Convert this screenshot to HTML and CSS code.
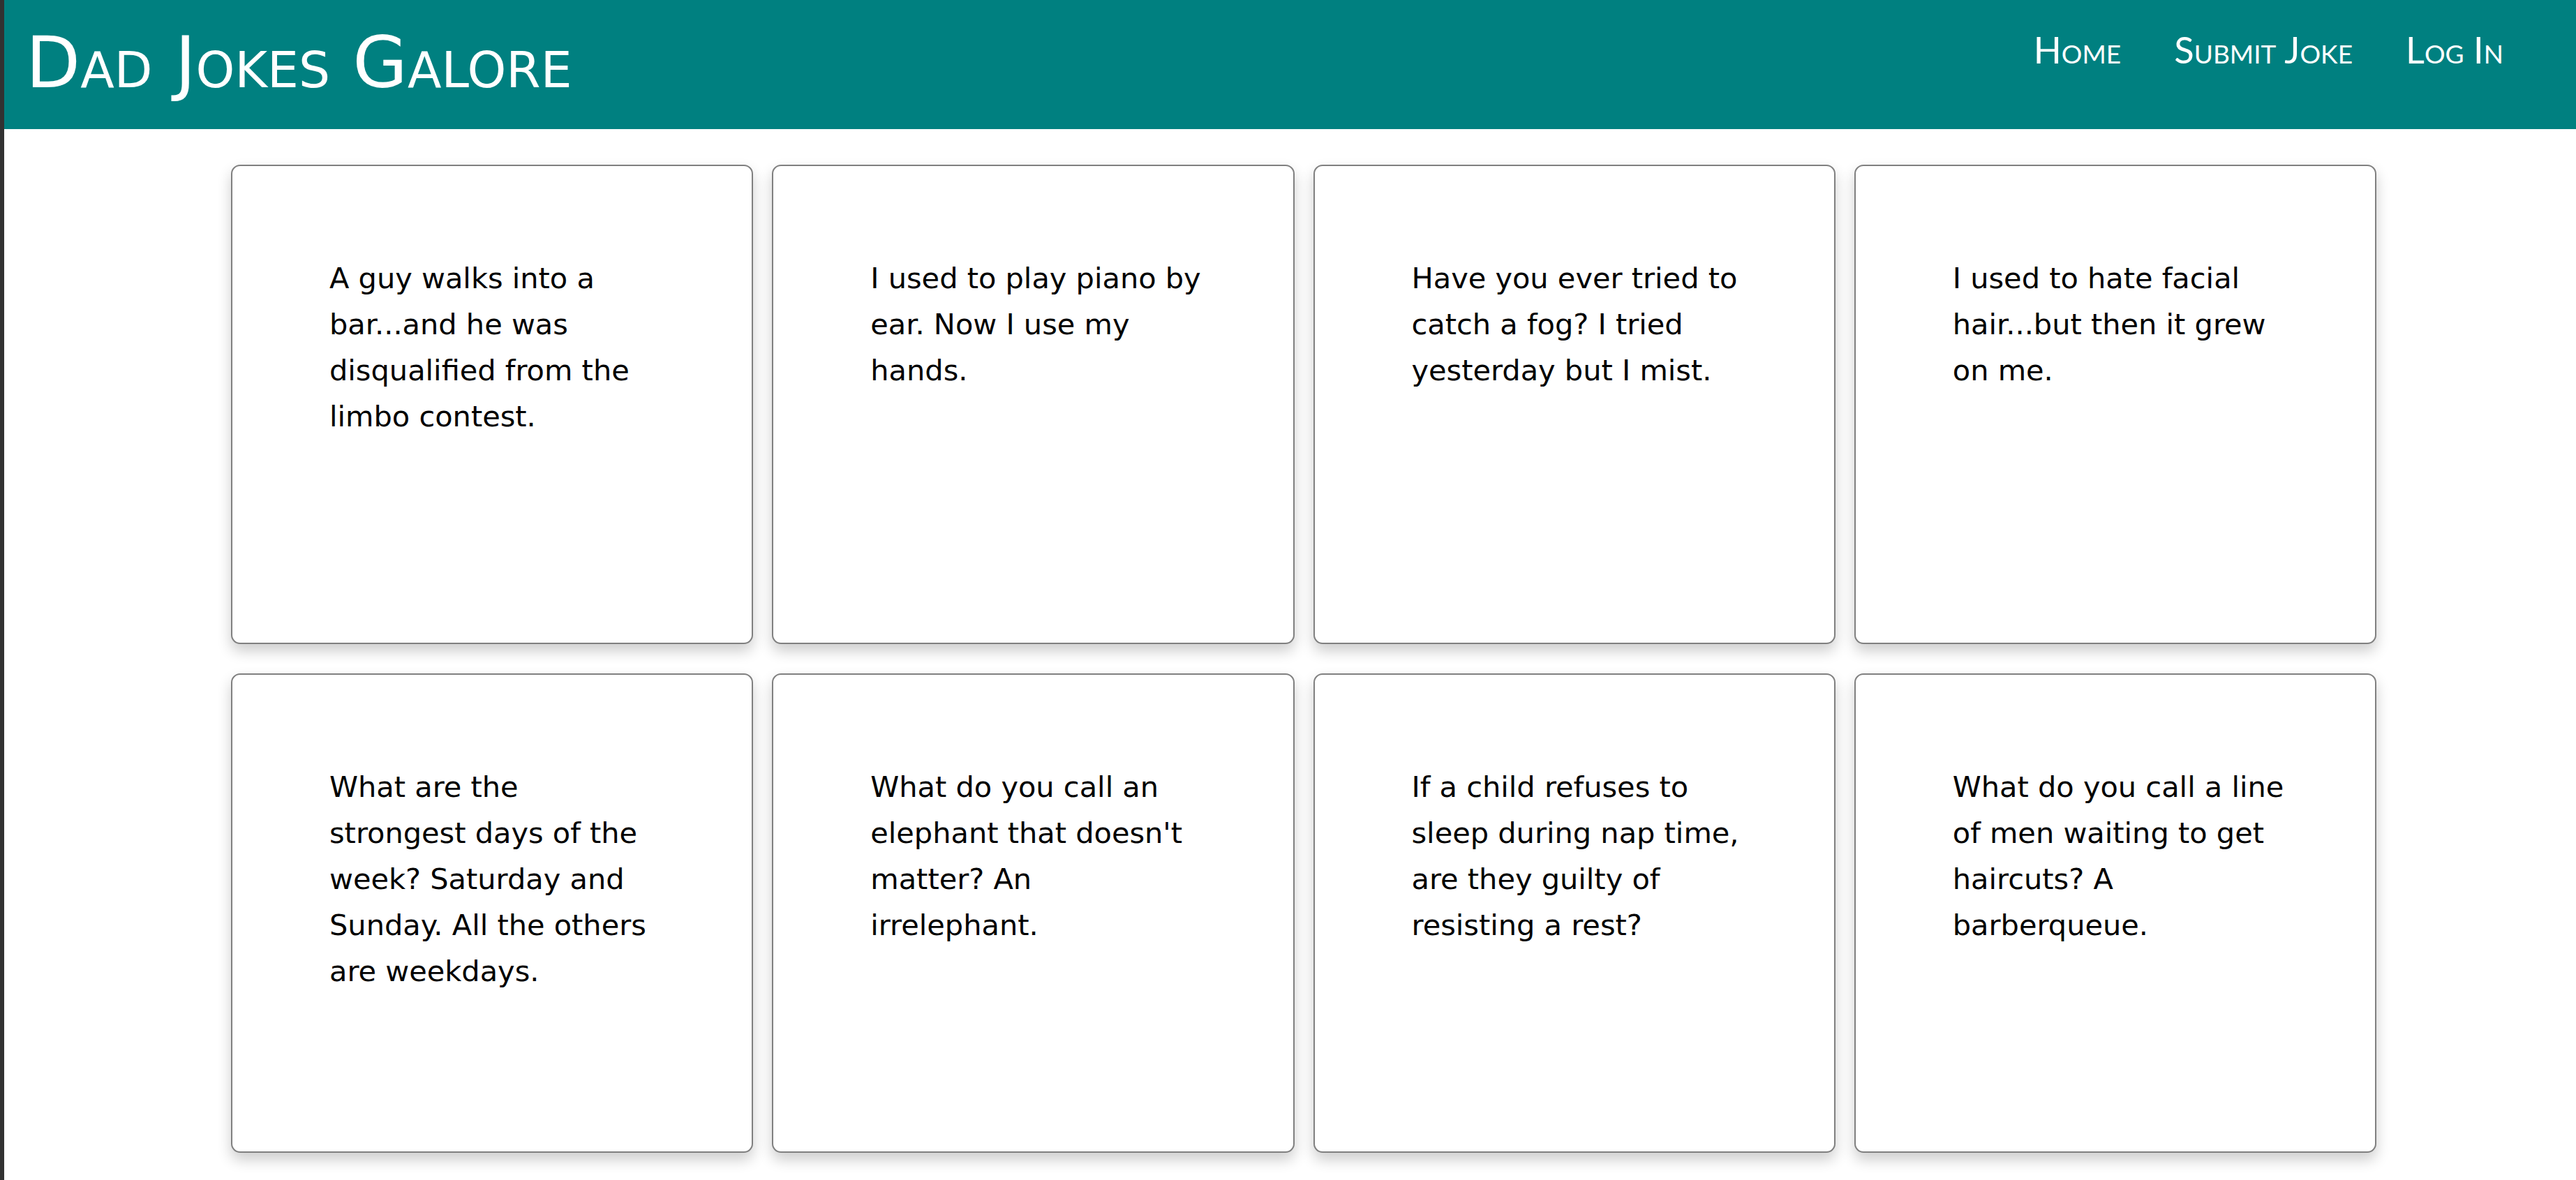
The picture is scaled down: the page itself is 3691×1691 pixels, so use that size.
FILE: index.html
```html
<!DOCTYPE html>
<html lang="en">
<head>
<meta charset="utf-8">
<title>Dad Jokes Galore</title>
<link rel="stylesheet" href="styles.css">
</head>
<body>
<header class="site-header">
  <h1 class="brand">Dad Jokes Galore</h1>
  <nav class="site-nav">
    <ul class="nav-list">
      <li><a class="nav-link" href="#">Home</a></li>
      <li><a class="nav-link" href="#">Submit Joke</a></li>
      <li><a class="nav-link" href="#">Log In</a></li>
    </ul>
  </nav>
</header>
<main class="jokes">
  <article class="joke-card"><p class="joke-text">A guy walks into a bar...and he was disqualified from the limbo contest.</p></article>
  <article class="joke-card"><p class="joke-text">I used to play piano by ear. Now I use my hands.</p></article>
  <article class="joke-card"><p class="joke-text">Have you ever tried to catch a fog? I tried yesterday but I mist.</p></article>
  <article class="joke-card"><p class="joke-text">I used to hate facial hair...but then it grew on me.</p></article>
  <article class="joke-card"><p class="joke-text">What are the strongest days of the week? Saturday and Sunday. All the others are weekdays.</p></article>
  <article class="joke-card"><p class="joke-text">What do you call an elephant that doesn't matter? An irrelephant.</p></article>
  <article class="joke-card"><p class="joke-text">If a child refuses to sleep during nap time, are they guilty of resisting a rest?</p></article>
  <article class="joke-card"><p class="joke-text">What do you call a line of men waiting to get haircuts? A barberqueue.</p></article>
</main>
</body>
</html>
```
FILE: styles.css
```css
html, body {
  margin: 0;
  padding: 0;
}

body {
  background: #ffffff;
  border-left: 6px solid #323232;
  min-height: 100vh;
  box-sizing: border-box;
}

.site-header {
  display: flex;
  justify-content: space-between;
  align-items: flex-start;
  height: 185px;
  background: #008080;
}

.brand {
  margin: 0;
  padding: 40px 0 0 31px;
  font-family: "Comic Sans MS", "DejaVu Sans", sans-serif;
  font-size: 101.5px;
  font-weight: normal;
  font-variant: small-caps;
  line-height: 1;
  color: #ffffff;
}

.nav-list {
  display: flex;
  gap: 76px;
  list-style: none;
  margin: 0;
  padding: 45px 104px 0 0;
}

.nav-link {
  font-family: Lato, "Open Sans", sans-serif;
  font-size: 52.5px;
  font-weight: 400;
  font-variant: small-caps;
  line-height: 1;
  color: #ffffff;
  text-decoration: none;
}

.jokes {
  display: grid;
  grid-template-columns: repeat(4, 1fr);
  column-gap: 27px;
  row-gap: 42px;
  padding: 51px 286px 60px 325px;
}

.joke-card {
  box-sizing: border-box;
  height: 687px;
  padding: 128px 127px 0 139px;
  background: #ffffff;
  border: 2px solid #808080;
  border-radius: 13px;
  box-shadow: 0 10px 20px rgba(0, 0, 0, 0.2);
}

.joke-text {
  margin: 0;
  font-family: "Comic Sans MS", "DejaVu Sans", sans-serif;
  font-size: 41.5px;
  line-height: 66px;
  color: #000000;
}
```
